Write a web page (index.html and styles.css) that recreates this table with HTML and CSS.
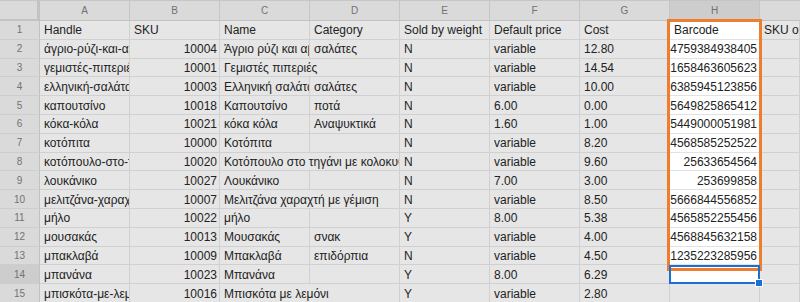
FILE: index.html
```html
<!DOCTYPE html>
<html lang="el">
<head>
<meta charset="utf-8">
<title>Sheet</title>
<link rel="stylesheet" href="styles.css">
</head>
<body>
<div class="sheet">
  <div class="corner"></div>
  <div class="ch">A</div><div class="ch">B</div><div class="ch">C</div><div class="ch">D</div><div class="ch">E</div><div class="ch">F</div><div class="ch">G</div><div class="ch sel">H</div><div class="ch last"></div>

  <div class="rh">1</div>
  <div class="c">Handle</div><div class="c">SKU</div><div class="c">Name</div><div class="c">Category</div><div class="c">Sold by weight</div><div class="c">Default price</div><div class="c">Cost</div><div class="c w">Barcode</div><div class="c">SKU of bundle</div>

  <div class="rh">2</div>
  <div class="c">άγριο-ρύζι-και-αβοκάντο</div><div class="c num">10004</div><div class="c">Άγριο ρύζι και αβοκάντο</div><div class="c">σαλάτες</div><div class="c">N</div><div class="c">variable</div><div class="c">12.80</div><div class="c w num">4759384938405</div><div class="c"></div>

  <div class="rh">3</div>
  <div class="c">γεμιστές-πιπεριές</div><div class="c num">10001</div><div class="c span2">Γεμιστές πιπεριές</div><div class="c">N</div><div class="c">variable</div><div class="c">14.54</div><div class="c w num">1658463605623</div><div class="c"></div>

  <div class="rh">4</div>
  <div class="c">ελληνική-σαλάτα</div><div class="c num">10003</div><div class="c">Ελληνική σαλάτα</div><div class="c">σαλάτες</div><div class="c">N</div><div class="c">variable</div><div class="c">10.00</div><div class="c w num">6385945123856</div><div class="c"></div>

  <div class="rh">5</div>
  <div class="c">καπουτσίνο</div><div class="c num">10018</div><div class="c">Καπουτσίνο</div><div class="c">ποτά</div><div class="c">N</div><div class="c">6.00</div><div class="c">0.00</div><div class="c w num">5649825865412</div><div class="c"></div>

  <div class="rh">6</div>
  <div class="c">κόκα-κόλα</div><div class="c num">10021</div><div class="c">κόκα κόλα</div><div class="c">Αναψυκτικά</div><div class="c">N</div><div class="c">1.60</div><div class="c">1.00</div><div class="c w num">5449000051981</div><div class="c"></div>

  <div class="rh">7</div>
  <div class="c">κοτόπιτα</div><div class="c num">10000</div><div class="c">Κοτόπιτα</div><div class="c"></div><div class="c">N</div><div class="c">variable</div><div class="c">8.20</div><div class="c w num">4568585252522</div><div class="c"></div>

  <div class="rh">8</div>
  <div class="c">κοτόπουλο-στο-τηγάνι-με-κολοκυθάκια</div><div class="c num">10020</div><div class="c span2">Κοτόπουλο στο τηγάνι με κολοκυθάκια</div><div class="c">N</div><div class="c">variable</div><div class="c">9.60</div><div class="c w num">25633654564</div><div class="c"></div>

  <div class="rh">9</div>
  <div class="c">λουκάνικο</div><div class="c num">10027</div><div class="c">Λουκάνικο</div><div class="c"></div><div class="c">N</div><div class="c">7.00</div><div class="c">3.00</div><div class="c w num">253699858</div><div class="c"></div>

  <div class="rh">10</div>
  <div class="c">μελιτζάνα-χαραχτή-με-γέμιση</div><div class="c num">10007</div><div class="c span2">Μελιτζάνα χαραχτή με γέμιση</div><div class="c">N</div><div class="c">variable</div><div class="c">8.50</div><div class="c w num">5666844556852</div><div class="c"></div>

  <div class="rh">11</div>
  <div class="c">μήλο</div><div class="c num">10022</div><div class="c">μήλο</div><div class="c"></div><div class="c">Y</div><div class="c">8.00</div><div class="c">5.38</div><div class="c w num">4565852255456</div><div class="c"></div>

  <div class="rh">12</div>
  <div class="c">μουσακάς</div><div class="c num">10013</div><div class="c">Μουσακάς</div><div class="c">σνακ</div><div class="c">Y</div><div class="c">variable</div><div class="c">4.00</div><div class="c w num">4568845632158</div><div class="c"></div>

  <div class="rh">13</div>
  <div class="c">μπακλαβά</div><div class="c num">10009</div><div class="c">Μπακλαβά</div><div class="c">επιδόρπια</div><div class="c">N</div><div class="c">variable</div><div class="c">4.50</div><div class="c w num">1235223285956</div><div class="c"></div>

  <div class="rh sel">14</div>
  <div class="c">μπανάνα</div><div class="c num">10023</div><div class="c">Μπανάνα</div><div class="c"></div><div class="c">Y</div><div class="c">8.00</div><div class="c">6.29</div><div class="c w"></div><div class="c"></div>

  <div class="rh">15</div>
  <div class="c">μπισκότα-με-λεμόνι</div><div class="c num">10016</div><div class="c span2">Μπισκότα με λεμόνι</div><div class="c">Y</div><div class="c">variable</div><div class="c">2.80</div><div class="c"></div><div class="c"></div>

  <div class="focus-box"></div>
  <div class="selection"><span class="fill-handle"></span></div>
</div>
</body>
</html>
```

FILE: styles.css
```css
html, body {
  margin: 0;
  padding: 0;
  background: #e6e6e6;
  overflow: hidden;
}

.sheet {
  position: relative;
  display: grid;
  grid-template-columns: 40px repeat(8, 90px) 40px;
  grid-template-rows: 20px repeat(15, 18.8px);
  width: 800px;
  height: 302px;
  font-family: "Liberation Sans", Arial, sans-serif;
  border-top: 1px solid #c6c6c6;
  box-sizing: border-box;
}

.sheet > div {
  box-sizing: border-box;
  min-width: 0;
}

.corner {
  background: #dadada;
  border-right: 3px solid #c2c2c2;
  border-bottom: 2px solid #c2c2c2;
}

.ch {
  display: flex;
  align-items: center;
  justify-content: center;
  background: #dadada;
  color: #727272;
  font-size: 10px;
  border-right: 1px solid #c6c6c6;
  border-bottom: 1px solid #c2c2c2;
}

.ch.last {
  border-right: none;
}

.rh {
  display: flex;
  align-items: center;
  justify-content: center;
  background: #dadada;
  color: #727272;
  font-size: 10px;
  border-right: 1px solid #c2c2c2;
  border-bottom: 1px solid #cdcdcd;
}

.sel {
  background: #cdcdcd;
}

.c {
  display: flex;
  align-items: center;
  padding: 1px 3px 0 4px;
  background: #e6e6e6;
  color: #222;
  font-size: 12px;
  white-space: nowrap;
  overflow: hidden;
  border-right: 1px solid #d0d0d0;
  border-bottom: 1px solid #d0d0d0;
}

.num {
  justify-content: flex-end;
  padding-right: 2px;
}

.span2 {
  grid-column: span 2;
}

.w {
  background: #ffffff;
  border-bottom-color: #e2e2e2;
}

.focus-box {
  position: absolute;
  left: 667px;
  top: 18px;
  width: 95px;
  height: 252px;
  border: 3px solid #ef7d2e;
  box-sizing: border-box;
  pointer-events: none;
}

.selection {
  position: absolute;
  left: 669px;
  top: 264px;
  width: 91px;
  height: 19px;
  border: 2px solid #1a6fd6;
  box-sizing: border-box;
}

.fill-handle {
  position: absolute;
  right: -5px;
  bottom: -5px;
  width: 6px;
  height: 6px;
  background: #1a6fd6;
  border: 1px solid #ffffff;
}
```
